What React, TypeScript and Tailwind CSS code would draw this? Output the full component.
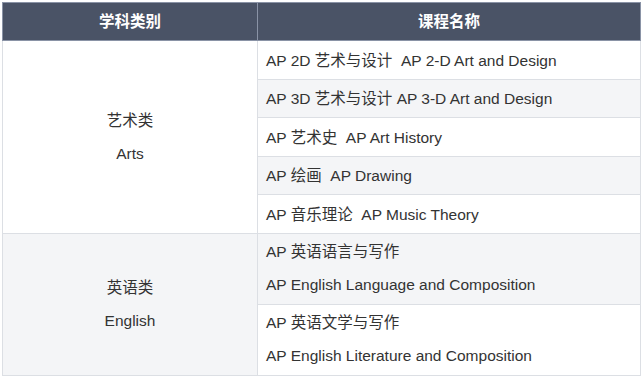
const font = { fontFamily: '"Liberation Sans", Arial, "Noto Sans CJK SC", sans-serif' }

type Course = { lines: string[]; shaded: boolean }
type Group = { zh: string; en: string; shaded: boolean; courses: Course[] }

const groups: Group[] = [
  {
    zh: '艺术类',
    en: 'Arts',
    shaded: false,
    courses: [
      { lines: ['AP 2D 艺术与设计  AP 2-D Art and Design'], shaded: false },
      { lines: ['AP 3D 艺术与设计 AP 3-D Art and Design'], shaded: true },
      { lines: ['AP 艺术史  AP Art History'], shaded: false },
      { lines: ['AP 绘画  AP Drawing'], shaded: true },
      { lines: ['AP 音乐理论  AP Music Theory'], shaded: false },
    ],
  },
  {
    zh: '英语类',
    en: 'English',
    shaded: true,
    courses: [
      { lines: ['AP 英语语言与写作', 'AP English Language and Composition'], shaded: true },
      { lines: ['AP 英语文学与写作', 'AP English Literature and Composition'], shaded: false },
    ],
  },
]

export default function App() {
  return (
    <div className="min-h-screen bg-white pl-[2px] pt-[2px]" style={font}>
      <table className="w-[638px] table-fixed border-collapse text-[15.5px] text-[#333]">
        <colgroup>
          <col className="w-[255px]" />
          <col className="w-[383px]" />
        </colgroup>
        <thead>
          <tr className="h-[38px] bg-[#4a5366] text-white">
            <th className="border border-[#8a93a6] text-center font-bold">学科类别</th>
            <th className="border border-[#8a93a6] text-center font-bold">课程名称</th>
          </tr>
        </thead>
        <tbody>
          {groups.map((g) =>
            g.courses.map((c, i) => (
              <tr key={g.zh + i}>
                {i === 0 && (
                  <td
                    rowSpan={g.courses.length}
                    className={`border border-[#dcdfe4] text-center align-middle leading-[33px] ${
                      g.shaded ? 'bg-[#f4f5f7]' : 'bg-white'
                    }`}
                  >
                    <div>{g.zh}</div>
                    <div>{g.en}</div>
                  </td>
                )}
                <td
                  className={`border border-[#dcdfe4] px-2 leading-[33px] whitespace-pre ${
                    c.lines.length > 1 ? 'pt-[1px] pb-[3px]' : 'pt-[2.5px] pb-[2px]'
                  } ${c.shaded ? 'bg-[#f4f5f7]' : 'bg-white'}`}
                >
                  {c.lines.map((l) => (
                    <div key={l}>{l}</div>
                  ))}
                </td>
              </tr>
            )),
          )}
        </tbody>
      </table>
    </div>
  )
}
